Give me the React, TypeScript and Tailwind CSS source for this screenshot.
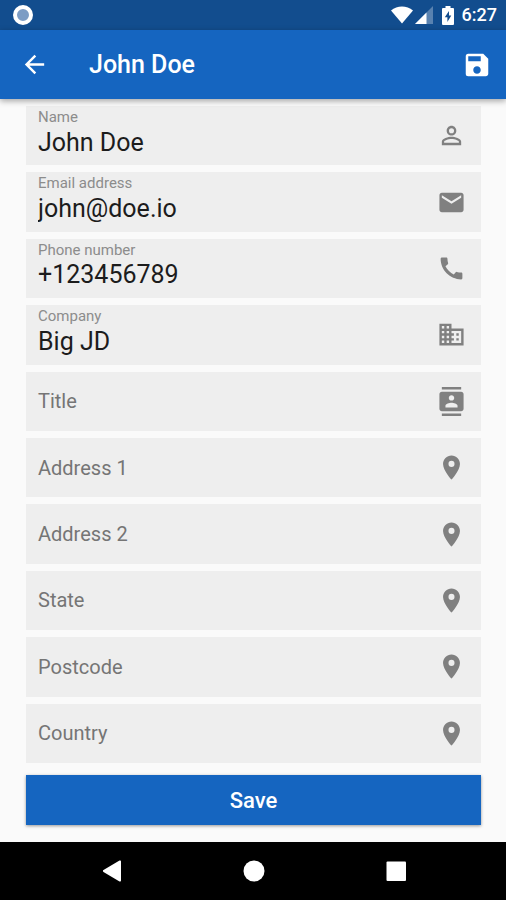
import type { ReactNode } from "react";
import {
  MdArrowBack,
  MdBusiness,
  MdCall,
  MdEmail,
  MdLocationOn,
  MdPersonOutline,
  MdSave,
} from "react-icons/md";

type FieldData = {
  id: string;
  label: string;
  value: string;
  type: string;
  icon: ReactNode;
};

function ContactsIcon() {
  return (
    <svg className="size-[29px]" viewBox="0 0 24 24" fill="currentColor" aria-hidden="true">
      <path d="M20 0H4v2h16V0zM4 24h16v-2H4v2zM20 4H4c-1.100 0-2 .900-2 2v12c0 1.100.900 2 2 2h16c1.100 0 2-.900 2-2V6c0-1.100-.900-2-2-2zm-8 2.750c1.240 0 2.250 1.010 2.250 2.250s-1.010 2.250-2.250 2.250S9.750 10.240 9.750 9 10.760 6.750 12 6.750zM17 17H7v-1.500c0-1.670 3.330-2.500 5-2.500s5 .830 5 2.500V17z" />
    </svg>
  );
}

const pin = <MdLocationOn size={29} aria-hidden="true" />;

const fields: FieldData[] = [
  { id: "name", label: "Name", value: "John Doe", type: "text", icon: <MdPersonOutline size={29} /> },
  { id: "email", label: "Email address", value: "john@doe.io", type: "email", icon: <MdEmail size={29} /> },
  { id: "phone", label: "Phone number", value: "+123456789", type: "tel", icon: <MdCall size={29} /> },
  { id: "company", label: "Company", value: "Big JD", type: "text", icon: <MdBusiness size={29} /> },
  { id: "title", label: "Title", value: "", type: "text", icon: <ContactsIcon /> },
  { id: "address1", label: "Address 1", value: "", type: "text", icon: pin },
  { id: "address2", label: "Address 2", value: "", type: "text", icon: pin },
  { id: "state", label: "State", value: "", type: "text", icon: pin },
  { id: "postcode", label: "Postcode", value: "", type: "text", icon: pin },
  { id: "country", label: "Country", value: "", type: "text", icon: pin },
];

function StatusBar() {
  return (
    <div className="flex h-[30px] shrink-0 items-center bg-[#124d8e] pr-[9px] pl-[13px] text-white">
      <span className="size-5 rounded-full border-4 border-white bg-[#7c9cc4]" />
      <div className="ml-auto flex items-center">
        <svg className="h-[18px] w-[22px]" viewBox="0 0 23 18" fill="currentColor" aria-hidden="true">
          <path d="M0 4.2C6.5-1.4 16.5-1.4 23 4.2L11.5 18z" />
        </svg>
        <svg className="ml-[2px] h-[18px] w-[18px]" viewBox="0 0 18 18" fill="currentColor" aria-hidden="true">
          <path d="M18 0v18H0z" opacity="0.3" />
          <path d="M11.500 6.500V18H0z" />
        </svg>
        <svg className="ml-[9px] h-[19px] w-3" viewBox="0 0 12 19" aria-hidden="true">
          <path
            d="M3.500 0h5v2H11a1 1 0 0 1 1 1v15a1 1 0 0 1-1 1H1a1 1 0 0 1-1-1V3a1 1 0 0 1 1-1h2.500z"
            fill="#fff"
          />
          <path d="M7 5L2.800 11.200h2.600V16l3.900-6.600H7z" fill="#124d8e" />
        </svg>
        <time className="ml-2 text-lg leading-6 font-medium">6:27</time>
      </div>
    </div>
  );
}

function Field({ id, label, value, type, icon }: FieldData) {
  return (
    <div className="relative flex bg-[#eeeeee]">
      <input
        id={id}
        type={type}
        defaultValue={value}
        placeholder=" "
        className="peer w-full min-w-0 bg-transparent pt-[14px] pr-14 pl-3 text-[25px] leading-8 text-[#1c1c1c] outline-none"
      />
      <label
        htmlFor={id}
        className="pointer-events-none absolute top-[3px] left-3 text-[15px] leading-4 text-[#8c8c8c] peer-placeholder-shown:inset-y-0 peer-placeholder-shown:flex peer-placeholder-shown:items-center peer-placeholder-shown:text-xl peer-placeholder-shown:text-[#757575]"
      >
        {label}
      </label>
      <span className="pointer-events-none absolute inset-y-0 right-[15px] flex items-center text-[#808080]">
        {icon}
      </span>
    </div>
  );
}

function NavButton({ label, children }: { label: string; children: ReactNode }) {
  return (
    <button type="button" aria-label={label} className="flex w-[142px] items-center justify-center">
      <svg className="size-6" viewBox="0 0 24 24" fill="#fff" aria-hidden="true">
        {children}
      </svg>
    </button>
  );
}

export default function App() {
  return (
    <div className="flex min-h-screen flex-col bg-[#fafafa] font-['Roboto',sans-serif]">
      <StatusBar />
      <header className="z-10 flex h-[69px] shrink-0 items-center bg-[#1565c0] pr-[14px] pl-5 text-white shadow-[0_2px_6px_rgba(0,0,0,0.35)]">
        <button type="button" aria-label="Back">
          <MdArrowBack size={29} />
        </button>
        <h1 className="ml-10 text-[25px] leading-8 font-medium">John Doe</h1>
        <button type="button" aria-label="Save contact" className="ml-auto">
          <MdSave size={30} />
        </button>
      </header>
      <form className="flex flex-1 flex-col pt-[7px] pr-[25px] pb-[17px] pl-[26px]" onSubmit={(e) => e.preventDefault()}>
        <div className="grid flex-1 auto-rows-fr gap-[7px]">
          {fields.map((field) => (
            <Field key={field.id} {...field} />
          ))}
        </div>
        <button
          type="submit"
          className="mt-3 h-[50px] bg-[#1565c0] text-[22px] font-medium text-white shadow-[0_1px_3px_rgba(0,0,0,0.4)]"
        >
          Save
        </button>
      </form>
      <nav className="flex h-[58px] shrink-0 justify-center bg-black pl-px">
        <NavButton label="Go back">
          <path d="M21 2.500v19a1 1 0 0 1-1.500.900L3.500 12.900a1 1 0 0 1 0-1.800L19.500 1.600a1 1 0 0 1 1.500.900z" />
        </NavButton>
        <NavButton label="Home">
          <circle cx="12" cy="12" r="10.500" />
        </NavButton>
        <NavButton label="Recent apps">
          <rect x="2.500" y="2.500" width="19.500" height="19.500" rx="1" />
        </NavButton>
      </nav>
    </div>
  );
}
